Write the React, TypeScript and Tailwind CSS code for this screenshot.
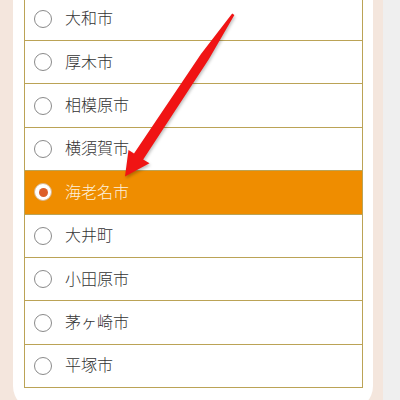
import React from "react";

const cities = [
  "大和市",
  "厚木市",
  "相模原市",
  "横須賀市",
  "海老名市",
  "大井町",
  "小田原市",
  "茅ヶ崎市",
  "平塚市",
];

export default function App() {
  return (
    <div
      className="relative w-[400px] h-[400px] overflow-hidden bg-[#efefef] flex"
      style={{ fontFamily: '"Noto Sans CJK JP", "Noto Sans", sans-serif' }}
    >
      <div className="w-[383px] h-full bg-[#f4e6dd] pl-[13px] pr-[10px] flex flex-col">
        <div className="w-[360px] shrink-0 bg-white rounded-b-[24px] pl-[11px] pr-[10px] pb-[22px] mt-[-3.4px]">
          <div className="border border-b-0 border-[#bba356]">
            {cities.map((c) => {
              const sel = c === "海老名市";
              return (
                <div
                  key={c}
                  className={`h-[43.4px] border-b border-[#bba356] flex items-center pl-[9px] ${
                    sel ? "bg-[#ef8d00]" : "bg-white"
                  }`}
                >
                  {sel ? (
                    <span className="shrink-0 w-[18px] h-[18px] rounded-full bg-white border border-[#d8b48a] flex items-center justify-center">
                      <span className="w-[9px] h-[9px] rounded-full bg-[#dd5f2a]" />
                    </span>
                  ) : (
                    <span className="shrink-0 w-[18px] h-[18px] rounded-full bg-white border-[1.5px] border-[#8a8a8a]" />
                  )}
                  <span
                    className={`ml-[13px] mb-[3px] text-[16px] leading-none font-light ${
                      sel ? "text-[#fdf1de]" : "text-[#333333]"
                    }`}
                  >
                    {c}
                  </span>
                </div>
              );
            })}
          </div>
        </div>
      </div>
      <svg
        className="absolute left-0 top-0 pointer-events-none"
        width="400"
        height="400"
        viewBox="0 0 400 400"
        style={{ filter: "drop-shadow(1px 2px 1.5px rgba(0,0,0,0.25))" }}
      >
        <polygon
          points="232.2,13.4 234.4,14.9 208.8,59.2 143.2,159.5 149.5,163.3 125,176.5 128.5,150 134,153.5 201,54"
          fill="#f01414"
        />
      </svg>
    </div>
  );
}
